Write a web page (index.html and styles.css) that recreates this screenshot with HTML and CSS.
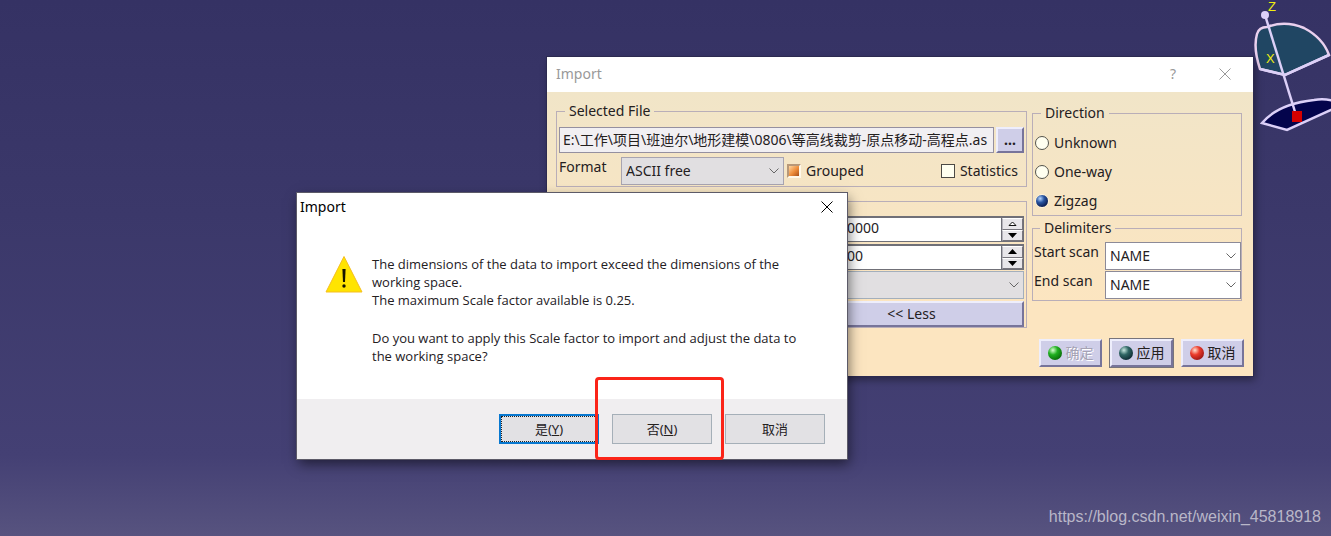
FILE: index.html
```html
<!DOCTYPE html>
<html lang="en">
<head>
<meta charset="utf-8">
<title>Import</title>
<link rel="stylesheet" href="styles.css">
</head>
<body>
<main class="desktop">
  <svg class="compass" width="101" height="140" viewBox="0 0 101 140" role="img" aria-label="Axis compass">
    <path d="M30 69 Q23 48 27 34 Q29 27 37 27 Q55 20 74 28 Q93 38 99 55 L55 75 Z" fill="#204663" stroke="#ead0ee" stroke-width="2.500"/>
    <path d="M30 69 L55 75 L99 55" fill="none" stroke="#dcd0f8" stroke-width="2.500"/>
    <path d="M32 123 Q48 104 84 100 Q96 98 107 102 L107 107 L57 130 Z" fill="#04044c" stroke="#dcd0f8" stroke-width="2.500"/>
    <path d="M35 15 L66 115" stroke="#dcd0f8" stroke-width="2.500"/>
    <circle cx="35" cy="15" r="4" fill="#dcd0f8"/>
    <rect x="62" y="111" width="10" height="11" fill="#d40000"/>
    <text class="axis" x="38" y="11">Z</text>
    <text class="axis" x="36" y="63">X</text>
  </svg>

  <section class="window import" aria-label="Import">
    <header class="titlebar titlebar-inactive">
      <h1 class="title">Import</h1>
      <button class="caption" type="button" aria-label="Help">?</button>
      <button class="caption" type="button" aria-label="Close"><svg width="12" height="12" viewBox="0 0 12 12"><path d="M.5 .5 11.5 11.5M11.5 .5 .5 11.5" stroke="currentColor"/></svg></button>
    </header>
    <form class="import-body">
      <div class="columns">
        <div class="column-main">
          <fieldset class="group file-group">
            <legend>Selected File</legend>
            <div class="file-row">
              <input class="path" type="text" aria-label="File path" readonly value="E:\工作\项目\班迪尔\地形建模\0806\等高线裁剪-原点移动-高程点.as">
              <button class="raised browse" type="button">...</button>
            </div>
            <div class="format-row">
              <label class="format-label" for="format">Format</label>
              <select class="combo combo-gray format" id="format"><option>ASCII free</option></select>
              <label class="check"><input class="box" type="checkbox" checked>Grouped</label>
              <label class="check check-end"><input class="box" type="checkbox">Statistics</label>
            </div>
          </fieldset>
          <div class="group options">
            <div class="spin">
              <input class="number" type="text" aria-label="Sampling" value="0000">
              <span class="arrows">
                <button class="arrow" type="button" aria-label="Increase"><svg width="9" height="5" viewBox="0 0 9 5"><path d="M1 4.5 4.5 1 8 4.5Z" fill="#fff" stroke="#111"/></svg></button>
                <button class="arrow" type="button" aria-label="Decrease"><svg width="9" height="5" viewBox="0 0 9 5"><path d="M0 0H9L4.500 5Z"/></svg></button>
              </span>
            </div>
            <div class="spin">
              <input class="number" type="text" aria-label="Scale factor" value="00">
              <span class="arrows">
                <button class="arrow" type="button" aria-label="Increase"><svg width="9" height="5" viewBox="0 0 9 5"><path d="M0 5H9L4.500 0Z"/></svg></button>
                <button class="arrow" type="button" aria-label="Decrease"><svg width="9" height="5" viewBox="0 0 9 5"><path d="M0 0H9L4.500 5Z"/></svg></button>
              </span>
            </div>
            <select class="combo combo-gray unit" aria-label="File unit"><option></option></select>
            <button class="raised less" type="button">&lt;&lt; Less</button>
          </div>
        </div>
        <div class="column-side">
          <fieldset class="group direction">
            <legend>Direction</legend>
            <label class="choice"><input class="radio" type="radio" name="direction">Unknown</label>
            <label class="choice"><input class="radio" type="radio" name="direction">One-way</label>
            <label class="choice"><input class="radio" type="radio" name="direction" checked>Zigzag</label>
          </fieldset>
          <fieldset class="group delimiters">
            <legend>Delimiters</legend>
            <div class="scan"><label for="start">Start scan</label><select class="combo" id="start"><option>NAME</option></select></div>
            <div class="scan"><label for="end">End scan</label><select class="combo" id="end"><option>NAME</option></select></div>
          </fieldset>
        </div>
      </div>
      <div class="actions">
        <button class="raised action" type="button" disabled><span class="ball ball-green"></span>确定</button>
        <button class="raised action action-default" type="button"><span class="ball ball-teal"></span>应用</button>
        <button class="raised action" type="button"><span class="ball ball-red"></span>取消</button>
      </div>
    </form>
  </section>

  <section class="window message" role="dialog" aria-label="Import">
    <header class="titlebar titlebar-active">
      <h2 class="title">Import</h2>
      <button class="caption" type="button" aria-label="Close"><svg width="12" height="12" viewBox="0 0 12 12"><path d="M.5 .5 11.5 11.5M11.5 .5 .5 11.5" stroke="currentColor"/></svg></button>
    </header>
    <div class="message-body">
      <svg class="warning" width="38" height="38" viewBox="0 0 38 38" role="img" aria-label="Warning">
        <path d="M19 1.500 37 37H1Z" fill="#ffe400" stroke="#f5bf20"/>
        <path d="M17.400 14H20.600L20 27H18Z" fill="#161600"/>
        <circle cx="19" cy="31" r="1.700" fill="#161600"/>
      </svg>
      <div class="message-text">
        <p>The dimensions of the data to import exceed the dimensions of the<br>working space.<br>The maximum Scale factor available is 0.25.</p>
        <p>Do you want to apply this Scale factor to import and adjust the data to<br>the working space?</p>
      </div>
    </div>
    <footer class="message-actions">
      <button class="push push-focus" type="button">是(<u>Y</u>)</button>
      <span class="marked"><button class="push" type="button">否(<u>N</u>)</button></span>
      <button class="push" type="button">取消</button>
    </footer>
  </section>

  <a class="watermark" href="https://blog.csdn.net/weixin_45818918">https://blog.csdn.net/weixin_45818918</a>
</main>
</body>
</html>
```
FILE: styles.css
```css
* { box-sizing: border-box; }

body {
  margin: 0;
  font: 14px/20px "Noto Sans", "Noto Sans CJK SC", sans-serif;
  color: #24201e;
}

button, input, select { font: inherit; color: inherit; margin: 0; border-radius: 0; }
button { padding: 0; }
svg { display: block; }

.desktop {
  position: relative;
  min-height: 100vh;
  overflow: hidden;
  background: linear-gradient(#353264, #3b386a 40%, #444074 85%, #57537f);
}

.compass { position: absolute; top: 0; right: 0; }
.axis { font: 13px "Liberation Sans", sans-serif; fill: #f0ee10; }

.window { position: absolute; background: #fff; }
.import { top: 57px; left: 547px; right: 78px; box-shadow: 0 0 0 1px #2c2a50, 2px 4px 8px #0006; }
.message { top: 193px; left: 297px; right: 484px; box-shadow: 0 0 0 1px #5c5a68, 2px 5px 12px #0008; }

.titlebar { display: flex; align-items: center; }
.titlebar-inactive { height: 35px; padding: 0 13px 2px 9px; gap: 22px; color: #999; }
.titlebar-active { height: 29px; padding: 0 5px 2px 3px; color: #000; }
.title { flex: 1; margin: 0; font-size: 14px; font-weight: 400; }
.caption { display: grid; place-items: center; width: 30px; height: 27px; border: 0; background: none; }

.import-body {
  padding: 9px;
  background: linear-gradient(#f1e5c8, #fce5c0 75%);
}
.columns { display: flex; gap: 5px; margin-right: 2px; }
.column-main { flex: 1; min-width: 0; }
.column-side { width: 210px; padding-top: 2px; }

.group { min-width: 0; margin: 0; padding: 0 2px; border: 1px solid #b9aeb8; }
.group legend { margin-left: 6px; padding: 0 4px; }

.file-group { padding-top: 6px; padding-bottom: 1px; }

.file-row { display: flex; gap: 2px; }
.path { flex: 1; min-width: 0; height: 26px; padding: 0 3px 2px; border: 1px solid #9590a0; background: #f1eff2; }
.raised {
  border: 2px solid;
  border-color: #eeeefc #77749a #77749a #eeeefc;
  background: #cfcee8;
}
.browse { width: 28px; height: 26px; font-weight: 700; }

.format-row { display: flex; align-items: center; margin-top: 4px; }
.format-label { align-self: flex-start; width: 62px; }
.combo {
  appearance: none;
  height: 28px;
  padding: 0 24px 0 4px;
  border: 1px solid #8c8a98;
  background: #fff url("data:image/svg+xml,%3Csvg xmlns='http://www.w3.org/2000/svg' width='10' height='6'%3E%3Cpath d='M.5 .5 5 5 9.500 .5' fill='none' stroke='%23666'/%3E%3C/svg%3E") no-repeat right 4px center;
}
.combo-gray { background-color: #e1dfe1; border-color: #a8a4b0; }
.format { width: 163px; }
.check { display: flex; align-items: center; gap: 5px; margin-left: 3px; }
.check-end { margin-left: auto; margin-right: 6px; }
.box { appearance: none; width: 14px; height: 14px; border: 1px solid #4c4a45; background: #fffff0; }
.box:checked { border: 2px solid; border-color: #b89878 #fff8e8 #fff8e8 #b89878; background: linear-gradient(135deg, #ffd6a0, #ed8b38 55%, #a84f18); }

.options { display: flex; flex-direction: column; gap: 2px; margin-top: 14px; padding-top: 14px; }
.spin { display: flex; height: 26px; border: 1px solid #707078; border-width: 2px 1px 1px; background: #fff; }
.number { flex: 1; min-width: 0; padding: 0 0 4px 287px; border: 0; background: none; }
.arrows { display: flex; flex-direction: column; width: 22px; border-left: 1px solid #707078; }
.arrow { display: grid; flex: 1; place-items: center; border: 1px solid; border-color: #fff #77757d #77757d #b5b3bb; background: #e8e6ea; }
.unit { margin-top: -1px; border-color: #a3afbc; padding-right: 24px; }
.less { height: 26px; padding-right: 0; padding-left: 240px; }

.direction { padding-top: 5px; }
.choice { display: flex; align-items: center; gap: 5px; height: 29px; }
.radio { appearance: none; width: 14px; height: 14px; border: 1px solid #54544c; border-radius: 50%; background: #fffff0; }
.radio:checked { border-color: #fff4dc; background: radial-gradient(circle at 35% 30%, #b5d5ff, #2854a0 35%, #0a1c50 75%); }
.delimiters { margin-top: 2px; padding: 4px 0 0 1px; }
.scan { display: flex; margin-bottom: 1px; }
.scan label { width: 71px; }
.scan .combo { flex: 1; min-width: 0; }

.actions { display: flex; justify-content: flex-end; gap: 8px; margin-top: 11px; }
.action { display: flex; align-items: center; justify-content: center; gap: 4px; width: 63px; height: 28px; }
.action:disabled { color: #a5a2b4; text-shadow: 1px 1px 0 #fff; }
.action-default { box-shadow: 0 0 0 1px #77747c; }
.ball { width: 14px; height: 14px; border-radius: 50%; }
.ball-green { background: radial-gradient(circle at 35% 30%, #d8ffd0, #20b020 35%, #086808 80%); }
.ball-teal { background: radial-gradient(circle at 35% 30%, #c8e8e0, #2f6664 35%, #0c2830 80%); }
.ball-red { background: radial-gradient(circle at 35% 30%, #ffe0d0, #ec3c2c 35%, #981414 80%); }

.message-body { display: flex; gap: 9px; padding: 33px 28px 34px; }
.message-text { font: 13px/18px "Open Sans", sans-serif; }
.message-text p { margin: 0 0 20px; }
.message-text p:last-child { margin-bottom: 0; }
.message-actions { display: flex; justify-content: flex-end; gap: 13px; padding: 15px 22px; background: #f0eef0; }
.push { width: 100px; height: 30px; border: 1px solid #a5afb8; background: #e2e1e4; font-size: 13px; }
.push-focus { border: 2px solid #0878d0; outline: 1px dotted #222; outline-offset: -3px; }
.marked { position: relative; }
.marked::after { content: ""; position: absolute; inset: -37px -12px -16px -17px; border: 3px solid #fb2418; border-radius: 4px; pointer-events: none; }

.watermark { position: absolute; right: 10px; bottom: 8px; font: 16px/22px "Liberation Sans", Arial, sans-serif; color: #b9b7c8; text-decoration: none; }
```
